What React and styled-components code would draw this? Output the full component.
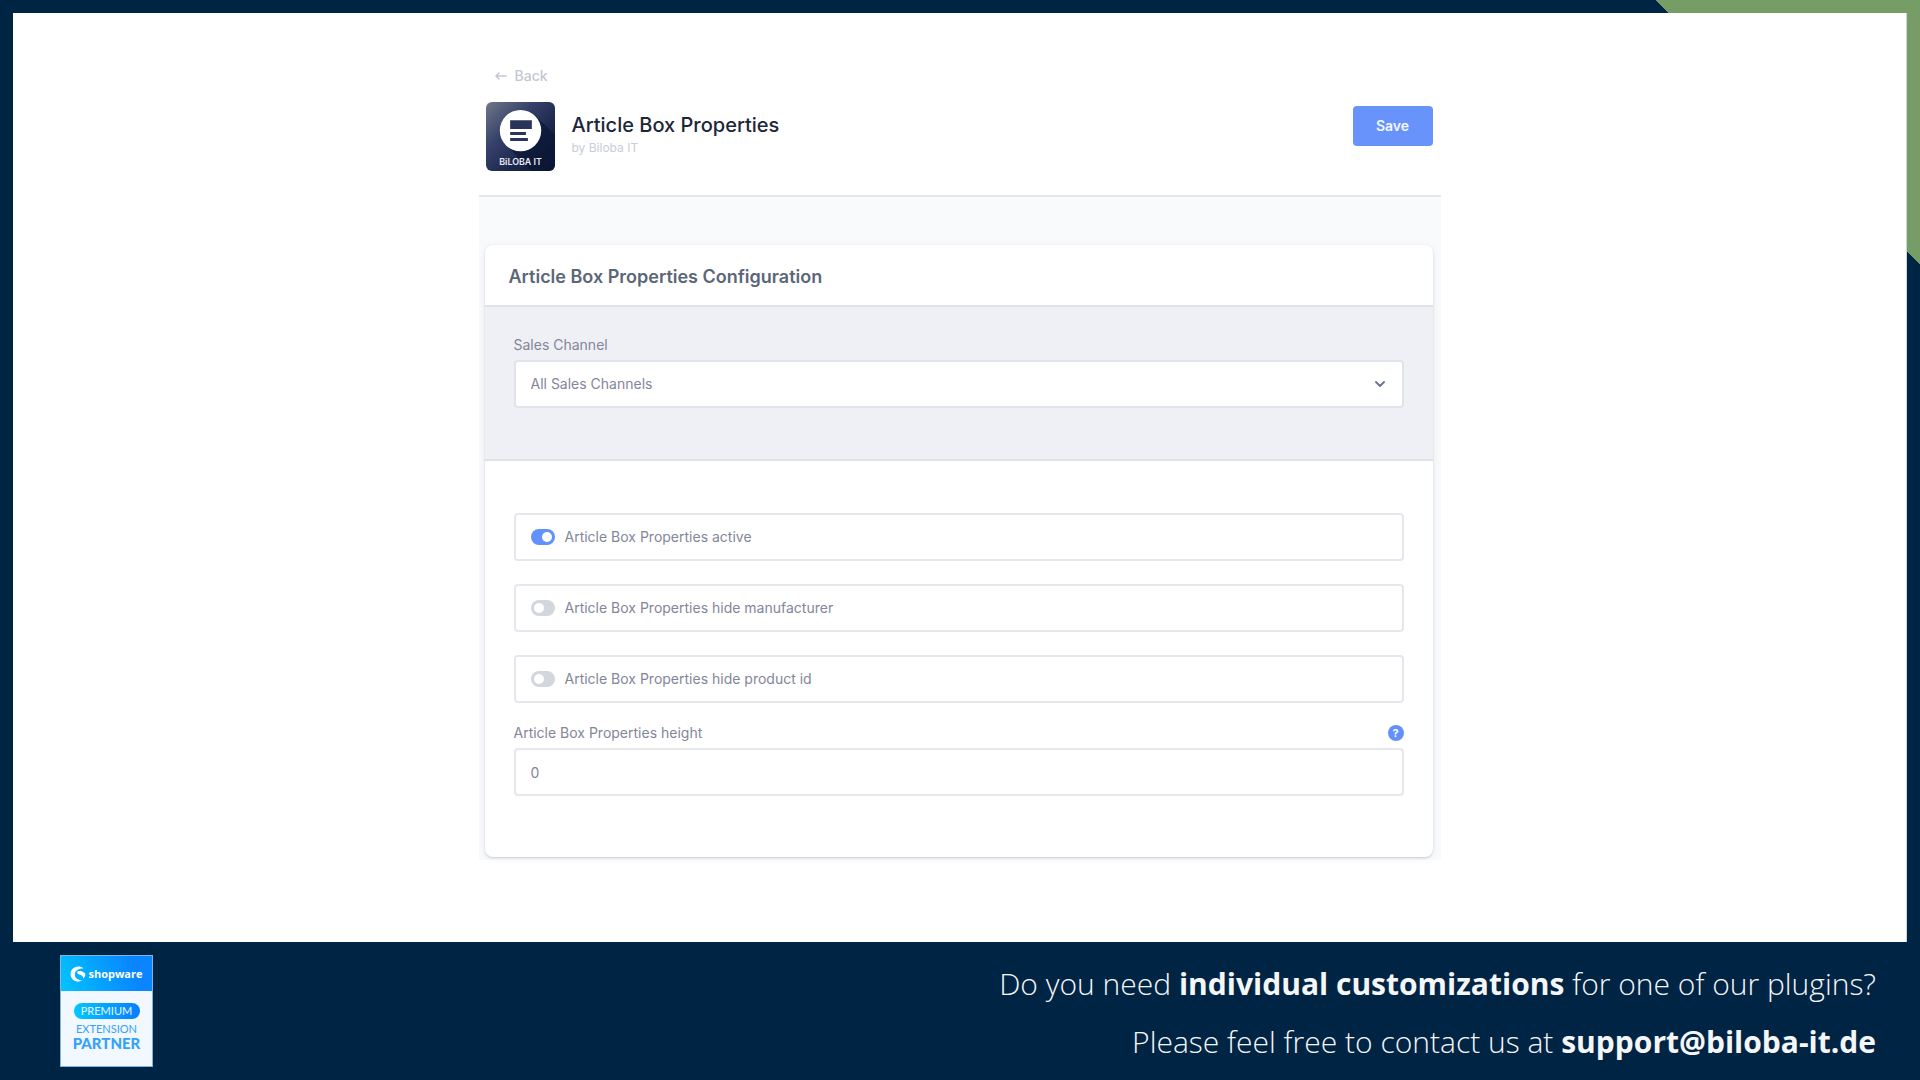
import React, { useState } from 'react'
import styled, { createGlobalStyle } from 'styled-components'

const GlobalStyle = createGlobalStyle`
    * {
        box-sizing: border-box;
    }

    body {
        margin: 0;
        font-family: Inter, "Liberation Sans", sans-serif;
        font-size: 14px;
        line-height: 20px;
        color: #83869a;
    }

    button, input, select {
        font: inherit;
        color: inherit;
    }
`

const Slide = styled.div`
    min-height: 100vh;
    display: flex;
    flex-direction: column;
    padding: 13px 13px 0;
    background: linear-gradient(225deg, #769d65 187px, #002444 187px);
`

const Stage = styled.main`
    flex: 1;
    padding: 53px 24px 80px;
    background: #fff;
    border: solid #cdd6d8;
    border-width: 0 1px 0 0;
`

const Admin = styled.div`
    width: 100%;
    max-width: 962px;
    margin: 0 auto;
`

/* ------------- Header ------------- */
const Header = styled.header`
    padding: 0 8px 24px 7px;
    border-bottom: 2px solid #e4e7ea;
`

const BackLink = styled.a`
    display: inline-flex;
    align-items: center;
    gap: 8px;
    padding-left: 9px;
    margin-bottom: 16px;
    color: #c3c8d2;
    font-weight: 500;
    text-decoration: none;
    vertical-align: top;
`

const TitleBar = styled.div`
    display: flex;
    align-items: flex-start;
`

const PluginIcon = styled.svg`
    width: 69px;
    height: 69px;
    flex: none;
`

const TitleText = styled.div`
    flex: 1;
    padding: 11px 17px 0;
`

const Title = styled.h1`
    margin: 0;
    color: #1d2638;
    font-size: 20px;
    font-weight: 500;
    line-height: 24px;
`

const Vendor = styled.p`
    margin: 1px 0 0;
    color: #c8cdd7;
    font-size: 12px;
`

const SaveButton = styled.button`
    width: 80px;
    height: 40px;
    margin-top: 4px;
    border: 0;
    border-radius: 4px;
    background: #6893fa;
    color: #f4f7ff;
    font-weight: 600;
`

/* ------------- Card ------------- */
const Content = styled.div`
    padding: 48px 8px 3px 6px;
    background: #f8fafc;
`

const Card = styled.section`
    border-radius: 8px;
    background: #fff;
    box-shadow: 0 1px 2px rgba(40, 50, 60, 0.2), 0 1px 8px rgba(40, 50, 60, 0.06);
`

const CardTitle = styled.h2`
    margin: 0;
    padding: 20px 24px 16px;
    border-bottom: 2px solid #dfe3e8;
    color: #5b6678;
    font-size: 18px;
    font-weight: 600;
    line-height: 24px;
`

const ChannelPanel = styled.div`
    padding: 28px 29px 51px;
    border-bottom: 2px solid #dfe3e8;
    background: #eff0f5;
`

const Settings = styled.form`
    padding: 52px 29px 61px;
`

const FieldHead = styled.div`
    display: flex;
    align-items: center;
    justify-content: space-between;
    margin-bottom: 5px;
`

const box = `
    width: 100%;
    height: 48px;
    border: 2px solid #e6e7ed;
    border-radius: 4px;
    background: #fff;
    outline: none;
`

const SelectBox = styled.div`
    position: relative;
`

const Select = styled.select`
    ${box}
    border-color: #e0e3e9;
    padding: 0 40px 0 15px;
    appearance: none;
`

const Chevron = styled.svg`
    position: absolute;
    top: 18px;
    right: 18px;
    pointer-events: none;
`

const TextInput = styled.input`
    ${box}
    padding: 0 15px;
`

const SwitchList = styled.div`
    display: grid;
    gap: 23px;
    margin-bottom: 20px;
`

const SwitchRow = styled.label`
    ${box}
    display: flex;
    align-items: center;
    gap: 10px;
    padding: 0 15px;
`

const Switch = styled.input`
    appearance: none;
    display: flex;
    align-items: center;
    justify-content: ${props => (props.checked ? 'flex-end' : 'flex-start')};
    width: 24px;
    height: 16px;
    margin: 0;
    padding: 0 3px;
    border-radius: 8px;
    background: ${props => (props.checked ? '#6391fb' : '#d2d7de')};

    &::before {
        content: '';
        width: 10px;
        height: 10px;
        border-radius: 50%;
        background: #fff;
    }
`

const HelpButton = styled.button`
    width: 16px;
    height: 16px;
    padding: 0;
    border: 0;
    border-radius: 50%;
    background: #6391fb;
    color: #fff;
    font-size: 11px;
    font-weight: 700;
    line-height: 16px;
`

/* ------------- Footer ------------- */
const Footer = styled.footer`
    display: flex;
    align-items: flex-start;
    justify-content: space-between;
    height: 138px;
    padding: 13px 31px 0 47px;
`

const Badge = styled.div`
    width: 93px;
    height: 112px;
    border: 1px solid #7fb4e0;
    background: #f1f8ff;
    color: #36a1fb;
    font-family: Lato, sans-serif;
    text-align: center;
`

const BadgeTop = styled.div`
    display: flex;
    align-items: center;
    justify-content: center;
    gap: 2px;
    height: 35px;
    background: linear-gradient(70deg, #00c4ff, #0a84ff 80%);
    color: #fff;
    font-family: "Open Sans", sans-serif;
    font-size: 11px;
    font-weight: 700;
    line-height: 16px;
`

const Premium = styled.div`
    width: 66px;
    margin: 12px auto 3px;
    border-radius: 8px;
    background: linear-gradient(90deg, #00c8ff, #0a7cff);
    color: #e8f6ff;
    font-size: 11px;
    line-height: 16px;
`

const BadgeLine = styled.div`
    font-size: ${props => (props.$strong ? 15 : 11)}px;
    font-weight: ${props => (props.$strong ? 900 : 400)};
    line-height: 14px;
`

const Pitch = styled.div`
    color: #f5f6f8;
    font-family: "Open Sans", "Noto Sans", sans-serif;
    font-size: 30px;
    font-weight: 300;
    line-height: 58px;
    text-align: right;

    p {
        margin: 0;
    }

    strong, a {
        color: inherit;
        font-weight: 700;
        text-decoration: none;
    }
`

const BilobaIcon = () => (
    <PluginIcon viewBox="0 0 70 70" role="img" aria-label="Biloba IT">
        <defs>
            <linearGradient id="tile" x1="0" y1="0" x2="1" y2="1">
                <stop offset="0" stopColor="#707888" />
                <stop offset="0.35" stopColor="#36416a" />
                <stop offset="0.65" stopColor="#1b274c" />
                <stop offset="1" stopColor="#0d1838" />
            </linearGradient>
            <clipPath id="tileClip">
                <rect width="70" height="70" rx="6" />
            </clipPath>
        </defs>
        <g clipPath="url(#tileClip)">
            <rect width="70" height="70" fill="url(#tile)" />
            <path d="M49 13L70 33V70H46L20 43z" fill="#091431" opacity="0.6" />
        </g>
        <circle cx="35" cy="29" r="21" fill="#fff" />
        <path d="M24.500 18.500h22v9h-22zM24.500 30.500h16v3h-16zM24.500 36.500h18v3h-18z" fill="#29345a" />
        <text x="35" y="64" textAnchor="middle" fontFamily="Inter" fontSize="9" fontWeight="600" fill="#e9ecf5">BiLOBA IT</text>
    </PluginIcon>
)

const toggles = [
    { name: 'active', label: 'Article Box Properties active' },
    { name: 'hideManufacturer', label: 'Article Box Properties hide manufacturer' },
    { name: 'hideProductId', label: 'Article Box Properties hide product id' },
]

const App = () => {
    const [values, setValues] = useState({ active: true, hideManufacturer: false, hideProductId: false })
    const [height, setHeight] = useState('0')

    const toggle = name => setValues(prev => ({ ...prev, [name]: !prev[name] }))

    return (
        <Slide>
            <GlobalStyle />
            <Stage>
                <Admin>
                    <Header>
                        <BackLink href="#back">
                            <svg width="12" height="10" viewBox="0 0 12 10" fill="none" stroke="currentColor" strokeWidth="1.5" strokeLinecap="round" strokeLinejoin="round">
                                <path d="M11 5H1M4 2L1 5l3 3" />
                            </svg>
                            Back
                        </BackLink>
                        <TitleBar>
                            <BilobaIcon />
                            <TitleText>
                                <Title>Article Box Properties</Title>
                                <Vendor>by Biloba IT</Vendor>
                            </TitleText>
                            <SaveButton type="submit" form="settings">Save</SaveButton>
                        </TitleBar>
                    </Header>

                    <Content>
                        <Card>
                            <CardTitle>Article Box Properties Configuration</CardTitle>
                            <ChannelPanel>
                                <FieldHead>
                                    <label htmlFor="channel">Sales Channel</label>
                                </FieldHead>
                                <SelectBox>
                                    <Select id="channel">
                                        <option>All Sales Channels</option>
                                    </Select>
                                    <Chevron width="12" height="12" viewBox="0 0 12 12" fill="none" stroke="#6c788c" strokeWidth="2" strokeLinecap="round" strokeLinejoin="round">
                                        <path d="M2 4l4 4 4-4" />
                                    </Chevron>
                                </SelectBox>
                            </ChannelPanel>
                            <Settings id="settings" onSubmit={e => e.preventDefault()}>
                                <SwitchList>
                                    {toggles.map(({ name, label }) => (
                                        <SwitchRow key={name}>
                                            <Switch type="checkbox" checked={values[name]} onChange={() => toggle(name)} />
                                            {label}
                                        </SwitchRow>
                                    ))}
                                </SwitchList>
                                <FieldHead>
                                    <label htmlFor="height">Article Box Properties height</label>
                                    <HelpButton type="button">?</HelpButton>
                                </FieldHead>
                                <TextInput id="height" value={height} onChange={e => setHeight(e.target.value)} />
                            </Settings>
                        </Card>
                    </Content>
                </Admin>
            </Stage>

            <Footer>
                <Badge>
                    <BadgeTop>
                        <svg width="16" height="16" viewBox="0 0 16 16" fill="#fff">
                            <path d="M13.500 2.400C12 1 10 .4 8 .5 3.800.700.500 4 .500 8.200c0 4.100 3.300 7.300 7.500 7.300 1.500 0 2.900-.4 4-1.200-4.200-.2-7.200-2.200-7.200-5.800 0-3.900 3.700-6.400 8.700-6.100z" />
                            <path d="M15.300 8c-1-1.700-3-2.700-5.600-2.900-1.600-.1-2.600.6-2.600 1.500 0 1.300 1.700 1.700 3.500 2.400 1.700.7 2.600 1.700 2.700 3.600 1.400-1.200 2.300-2.900 2-4.600z" />
                        </svg>
                        shopware
                    </BadgeTop>
                    <Premium>PREMIUM</Premium>
                    <BadgeLine>EXTENSION</BadgeLine>
                    <BadgeLine $strong>PARTNER</BadgeLine>
                </Badge>
                <Pitch>
                    <p>Do you need <strong>individual customizations</strong> for one of our plugins?</p>
                    <p>Please feel free to contact us at <a href="mailto:support@biloba-it.de">support@biloba-it.de</a></p>
                </Pitch>
            </Footer>
        </Slide>
    )
}

export default App
